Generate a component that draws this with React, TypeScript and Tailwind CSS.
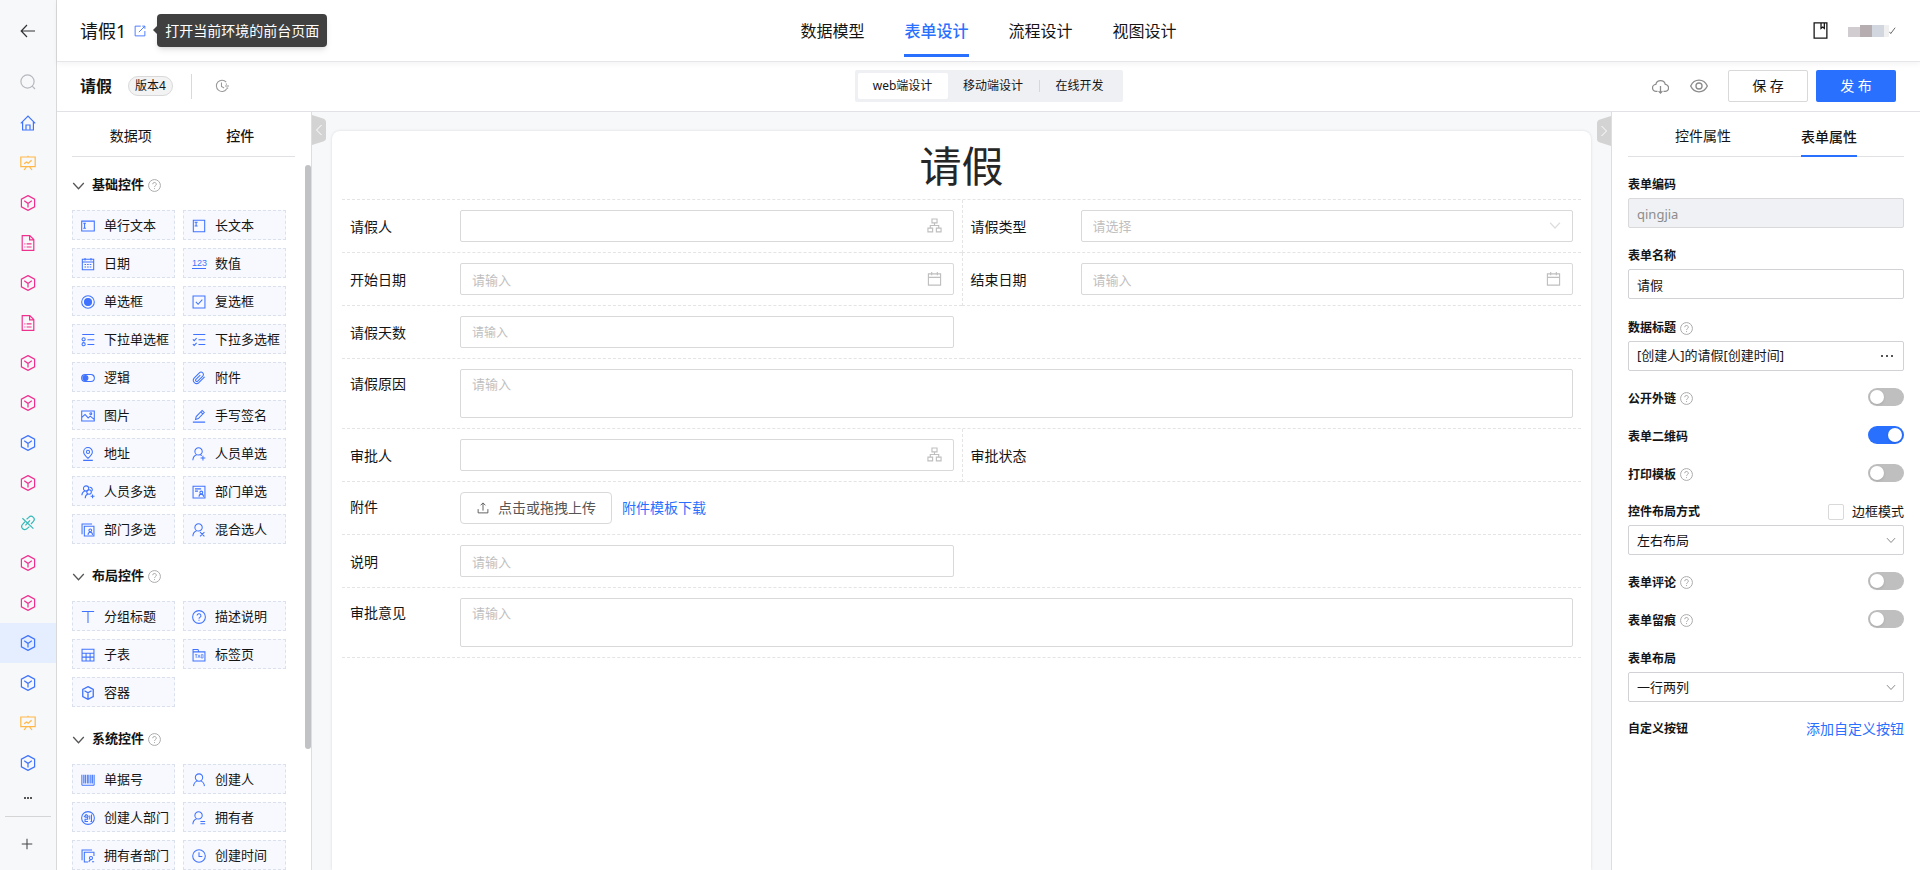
import type { ReactNode } from 'react'

const ICONS: Record<string, ReactNode> = {
  back: <path d="M15 8H1.5M7 2 1.2 8 7 14" />,
  search: (
    <>
      <circle cx="7.5" cy="7.5" r="6.6" />
      <path d="m12.2 12.2 2.8 2.8" />
    </>
  ),
  home: (
    <>
      <path d="M.8 8.4 8 1.2l7.2 7.2M2.6 6.8v8.2h10.8V6.8" />
      <path d="M6 14.8V10h4v4.8" />
    </>
  ),
  board: (
    <>
      <path d="M8 .8V2M.8 2h14.4v9.6H.8zM6.4 12 4 15M9.6 12l2.4 3" />
      <path d="m4.2 8.8 2.2-1.8 1.8 1.2 3.4-3" />
    </>
  ),
  cube: (
    <>
      <path d="M8 .6 14.6 4.2v7.6L8 15.4 1.4 11.8V4.2z" />
      <path d="M8 12.4V8.4L4.2 5.8M8 8.4l3.8-2.6" />
    </>
  ),
  doc: (
    <>
      <path d="M2.2.6h7.6l4 4v10.8H2.2zM9.6.8v4h4" />
      <path d="M4.4 8.8h1M6.6 8.8h5M4.4 12h1M6.6 12h5" />
    </>
  ),
  unlink: (
    <>
      <path d="M6.6 4.2 8.8 2.4a3 3 0 0 1 4.6 4L11 9M5 6.6 2.6 9.4a3 3 0 0 0 4.4 4.2L9.4 11.6" />
      <path d="m2.4 3.2 11 10.4M10 5.4l-4.6 5" />
    </>
  ),
  plus: <path d="M8 2v12M2 8h12" />,
  external: (
    <>
      <path d="M9 1.5H1.5v13h13V8" />
      <path d="M11 1.5h3.5V5M14.2 1.8 6.5 9.5" />
    </>
  ),
  history: (
    <>
      <path d="M12.8 3.6a6.4 6.4 0 1 0 .4 8M7.4 4v4.6l3 1.6M13 5v1.5M11.4 8H16M13 10.4h2" />
    </>
  ),
  book: <path d="M2 .8h12v14.4H2zM8.5 1v5l1.6-1.2L11.6 6V1" />,
  cloud: (
    <path d="M5.2 12.6H4A3.3 3.3 0 0 1 3.6 6 4.6 4.6 0 0 1 12.5 6a3.3 3.3 0 0 1-.4 6.6h-1.3M8 7.5v6.8M6.2 12.4 8 14.3l1.8-1.9" />
  ),
  eye: (
    <>
      <path d="M.6 8C2.2 4.6 4.9 2.8 8 2.8S13.8 4.6 15.4 8c-1.6 3.4-4.3 5.2-7.4 5.2S2.2 11.4.6 8z" />
      <circle cx="8" cy="8" r="2.7" />
    </>
  ),
  down: <path d="M1.5 5 8 12l6.5-7" strokeWidth="1.6" />,
  help: (
    <>
      <circle cx="8" cy="8" r="7.3" />
      <path d="M5.8 6.4a2.2 2.2 0 1 1 3.2 2c-.7.4-1 .8-1 1.5M8 11.2v1.2" />
    </>
  ),
  org: (
    <path d="M5.3 1h5.4v4.2H5.3zM1 10.8h5v4H1zM10 10.8h5v4h-5zM8 5.2V8M3.5 10.8V8h9v2.8" />
  ),
  calendar: <path d="M1.5 3h13v12h-13zM1.5 6.8h13M5 1v3.6M11 1v3.6" />,
  upload: <path d="M1.5 9.5v5h13v-5M8 11.5v-10M4.8 4.4 8 1.2l3.2 3.2" />,
  text: <path d="M.8 2.4h14.4v11.4H.8zM2.6 4.8h3M2.6 10.6h3M4.1 4.8v5.8" />,
  longText: <path d="M1.5 1.5h13v13h-13zM3 3.6h3.4M3 8h3.4M4.7 3.6V8" />,
  date: (
    <>
      <path d="M1.5 2.5h13v12h-13zM1.5 5.6h13M4.6 1v3M11.4 1v3" />
      <path d="M4 8.6h8M4 11.4h8" strokeDasharray="1.8 1.2" />
    </>
  ),
  radio: (
    <>
      <circle cx="8" cy="8" r="7.2" />
      <circle cx="8" cy="8" r="4" fill="currentColor" />
    </>
  ),
  check: <path d="M1.2 1.2h13.6v13.6H1.2zM4.4 7.8 7 10.6l4.8-5.4" />,
  selectOne: (
    <>
      <path d="M1.4 1.8h13.8M7.4 7.6h7.8M7.4 13.2h7.8" />
      <circle cx="3" cy="7.2" r="1.8" />
      <circle cx="3" cy="12.8" r="1.8" />
    </>
  ),
  selectMany: <path d="M1.4 1.8h13.8M7.4 7.6h7.8M7.4 13.2h7.8M1 7.2l1.5 1.6 2.8-3M1 12.6l1.5 1.6 2.8-3" />,
  toggle: (
    <>
      <rect x=".7" y="4" width="14.6" height="8" rx="4" />
      <circle cx="5" cy="8" r="2.9" fill="currentColor" />
    </>
  ),
  clip: (
    <path d="m14.4 6.6-6.6 6.8a3.8 3.8 0 0 1-5.4-5.3l6-6a2.7 2.7 0 0 1 3.9 3.8l-5.8 5.8a1.4 1.4 0 0 1-2-2l5-5" />
  ),
  image: (
    <>
      <path d="M.8 2.2h14.4v11.6H.8zM1 9.6l3.6-3.4 3.6 4 2.4-2 4.4 3.6" />
      <circle cx="11.2" cy="5.4" r="1.1" />
    </>
  ),
  sign: <path d="M1 15h14M4 12l.8-3.4L11.6 1.6l2.4 2.4-6.8 7zM10 3.4l2.2 2.2" />,
  pin: (
    <>
      <path d="M8 13C4.8 10 3 7.8 3 5.6a5 5 0 0 1 10 0C13 7.8 11.2 10 8 13zM2.5 15.3h11" />
      <circle cx="8" cy="5.6" r="1.8" />
    </>
  ),
  userAdd: (
    <>
      <circle cx="7.5" cy="5" r="4.2" />
      <path d="M1 15.2c0-3.6 1.8-5.4 4.2-6.4M9.6 8.8l1.6 1M12.5 10v5.4M9.8 12.6h5.4" />
    </>
  ),
  users: (
    <>
      <circle cx="5.8" cy="4" r="3" />
      <path d="M1 11.8C1 9 2.2 7.8 4.2 6.8M9.6 2.6a3 3 0 0 1 3 4.4" />
      <circle cx="9.2" cy="8" r="2.6" />
      <path d="M4.8 15c0-2.6 1.2-3.8 3-4.6M13.2 10.8v4.2M11 12.9h4.4" />
    </>
  ),
  dept: (
    <>
      <path d="M1.2 1.4h13.6v13.4H1.2zM3.4 4.4h7M3.4 7h3.4" />
      <circle cx="10.6" cy="8.6" r="1.6" />
      <path d="M8 13.4c.1-2 1-3 2.6-3s2.5 1 2.6 3" />
    </>
  ),
  depts: (
    <>
      <path d="M3.8 3.8h11v11h-11zM12.6 1.2H1.2v11.6" />
      <circle cx="10.6" cy="8.4" r="1.6" />
      <path d="M8 13.6c.1-2 1-3 2.6-3s2.5 1 2.6 3" />
    </>
  ),
  userMix: (
    <>
      <circle cx="7.5" cy="5" r="4.2" />
      <path d="M1 15.2c0-3.6 1.8-5.4 4.2-6.4M9.2 10.4l5 4.8M14.2 10.4l-5 4.8" />
    </>
  ),
  title: <path d="M1 1.8h14M8 1.8v13" />,
  tableGrid: <path d="M1.2 1.4h13.6v13.4H1.2zM1.2 6h13.6M1.2 10.4h13.6M5.8 6v8.6M10.4 6v8.6" />,
  tabPage: (
    <>
      <path d="M1.2 4.4h13.6v10.4H1.2zM1.2 4.4V1.6h5.6l1 2.8" />
      <path d="M3.4 7.6h2.8M4.8 7.6v3.8M6.8 11.4l1.2-3.6 1.2 3.6M10.6 7.6v3.8h2V7.6z" strokeWidth=".8" />
    </>
  ),
  box: <path d="M8 .8 14 4v8l-6 3.2L2 12V4zM4 5.4 8 7.8l4-2.4M8 7.8V15" strokeWidth="1.5" />,
  barcode: (
    <path d="M1 2v12M3.2 2v10M5 2v10M7.2 2v10M9 2v10M11.2 2v10M13 2v10M15 2v12M1 14h14" strokeWidth="1.2" />
  ),
  user: (
    <>
      <circle cx="8" cy="5.2" r="4.2" />
      <path d="M1.8 15c.2-3.2 1.8-5 4.2-6M14.2 15c-.2-3.2-1.8-5-4.2-6" />
    </>
  ),
  creatorDept: (
    <>
      <circle cx="8" cy="8" r="7.3" />
      <path d="M6 3.8 3.4 7M6 3.8l2.6 2.6M4.6 7h3v2.4H4.6V12H8M10 5v4.6M12 4v8h-1.2" />
    </>
  ),
  owner: (
    <>
      <circle cx="7.5" cy="5" r="4.2" />
      <path d="M1 15.2c0-3.6 1.8-5.4 4.2-6.4M9.6 12h5.4M9.6 14.6h5.4" />
    </>
  ),
  ownerDept: (
    <>
      <path d="M8 14.8H3.8v-11h11V8M12.6 1.2H1.2v11.6" />
      <circle cx="11.4" cy="10.4" r="1.8" />
      <path d="M9 15c.1-1.6 1-2.4 2.4-2.6M12.6 14.6H15" />
    </>
  ),
  clock: (
    <>
      <circle cx="8" cy="8" r="7.2" />
      <path d="M8 3.6V8.6h3.8" />
    </>
  ),
}

function Icon({ name, className = 'size-4' }: { name: string; className?: string }) {
  return (
    <svg
      viewBox="0 0 16 16"
      className={`shrink-0 ${className}`}
      fill="none"
      stroke="currentColor"
      strokeWidth="1.2"
      aria-hidden="true"
    >
      {ICONS[name]}
    </svg>
  )
}

const RAIL = [
  { icon: 'home', color: 'text-[#3f73ff]' },
  { icon: 'board', color: 'text-[#ffb848]' },
  { icon: 'cube', color: 'text-[#f0308f]' },
  { icon: 'doc', color: 'text-[#f0308f]' },
  { icon: 'cube', color: 'text-[#f0308f]' },
  { icon: 'doc', color: 'text-[#f0308f]' },
  { icon: 'cube', color: 'text-[#f0308f]' },
  { icon: 'cube', color: 'text-[#f0308f]' },
  { icon: 'cube', color: 'text-[#3f73ff]' },
  { icon: 'cube', color: 'text-[#f0308f]' },
  { icon: 'unlink', color: 'text-[#35b8b8]' },
  { icon: 'cube', color: 'text-[#f0308f]' },
  { icon: 'cube', color: 'text-[#f0308f]' },
  { icon: 'cube', color: 'text-[#3f73ff]', active: true },
  { icon: 'cube', color: 'text-[#3f73ff]' },
  { icon: 'board', color: 'text-[#ffb848]' },
  { icon: 'cube', color: 'text-[#3f73ff]' },
]

const NAV = ['数据模型', '表单设计', '流程设计', '视图设计']

const GROUPS = [
  {
    title: '基础控件',
    items: [
      ['text', '单行文本'],
      ['longText', '长文本'],
      ['date', '日期'],
      ['number', '数值'],
      ['radio', '单选框'],
      ['check', '复选框'],
      ['selectOne', '下拉单选框'],
      ['selectMany', '下拉多选框'],
      ['toggle', '逻辑'],
      ['clip', '附件'],
      ['image', '图片'],
      ['sign', '手写签名'],
      ['pin', '地址'],
      ['userAdd', '人员单选'],
      ['users', '人员多选'],
      ['dept', '部门单选'],
      ['depts', '部门多选'],
      ['userMix', '混合选人'],
    ],
  },
  {
    title: '布局控件',
    items: [
      ['title', '分组标题'],
      ['help', '描述说明'],
      ['tableGrid', '子表'],
      ['tabPage', '标签页'],
      ['box', '容器'],
    ],
  },
  {
    title: '系统控件',
    items: [
      ['barcode', '单据号'],
      ['user', '创建人'],
      ['creatorDept', '创建人部门'],
      ['owner', '拥有者'],
      ['ownerDept', '拥有者部门'],
      ['clock', '创建时间'],
    ],
  },
]

function Rail() {
  return (
    <aside className="flex w-[57px] shrink-0 flex-col border-r border-[#d9d9d9] bg-[#f7f8fa]">
      <button aria-label="返回" className="flex h-[62px] shrink-0 items-center justify-center text-[#333]">
        <Icon name="back" />
      </button>
      <button aria-label="搜索" className="flex h-[41px] shrink-0 items-center justify-center pb-0.5 text-[#b5b8bd]">
        <Icon name="search" />
      </button>
      {RAIL.map((item, i) => (
        <button
          key={i}
          aria-label={`应用${i + 1}`}
          className={`flex h-10 shrink-0 items-center justify-center ${item.color} ${item.active ? 'bg-[#e5eeff]' : ''}`}
        >
          <Icon name={item.icon} />
        </button>
      ))}
      <button aria-label="更多" className="flex h-[33px] shrink-0 items-center justify-center gap-px pb-1">
        <i className="size-0.5 bg-[#555]" />
        <i className="size-0.5 bg-[#555]" />
        <i className="size-0.5 bg-[#555]" />
      </button>
      <div className="mx-[5px] h-px shrink-0 bg-[#d5d5d5]" />
      <button aria-label="新增" className="flex flex-1 items-center justify-center pr-0.5 text-[#444]">
        <Icon name="plus" className="size-[14px]" />
      </button>
    </aside>
  )
}

function Header() {
  return (
    <header className="relative z-20 grid h-[62px] shrink-0 grid-cols-[1fr_auto_1fr] items-stretch border-b border-[#e4e6e9] bg-white shadow-[0_2px_6px_rgba(0,0,0,0.05)]">
      <div className="flex items-center pl-[23px]">
        <span className="text-lg">请假1</span>
        <a href="#open" aria-label="打开" className="ml-2 text-[#3f73ff]">
          <Icon name="external" className="size-3" />
        </a>
        <div
          role="tooltip"
          className="relative ml-[11px] rounded bg-[#404040] px-2 py-1.5 text-sm leading-[21px] text-white shadow-md"
        >
          <i className="absolute top-3 -left-1 h-0 w-0 border-y-4 border-r-4 border-y-transparent border-r-[#404040]" />
          打开当前环境的前台页面
        </div>
      </div>
      <nav className="flex gap-10 pb-1">
        {NAV.map((name) => {
          const isActive = name === '表单设计'
          return (
            <a
              key={name}
              href="#nav"
              className={`flex items-center border-b-[3px] pt-[7px] text-base ${
                isActive ? 'border-[#2970ff] font-medium text-[#2970ff]' : 'border-transparent'
              }`}
            >
              {name}
            </a>
          )
        })}
      </nav>
      <div className="flex items-center justify-end pr-6">
        <Icon name="book" className="size-[17px]" />
        <div className="ml-[19px] flex">
          <i className="mt-0.5 h-[10px] w-3 bg-[#d0cccf]" />
          <i className="h-3 w-3 bg-[#b5adaf]" />
          <i className="h-3 w-3 bg-[#d2d6de]" />
          <i className="h-3 w-[5px] bg-[#f0f0f0]" />
        </div>
        <svg viewBox="0 0 8 8" className="size-[7px]" fill="none" stroke="#555" aria-hidden="true">
          <path d="m.5 5.5 1.5 2L7 .8" />
        </svg>
      </div>
    </header>
  )
}

function Toolbar() {
  return (
    <div className="grid h-[50px] shrink-0 grid-cols-[1fr_auto_1fr] items-center border-b border-[#e0e2e5] bg-white pb-px">
      <div className="flex items-center pl-[23px]">
        <h1 className="text-base font-bold">请假</h1>
        <span className="ml-4 rounded-full border border-[#d9d9d9] bg-[#f3f3f3] px-1.5 text-xs leading-[18px]">
          版本4
        </span>
        <i className="ml-[18px] h-[25px] w-px bg-[#d9d9d9]" />
        <button aria-label="历史" className="ml-[23px] text-[#999]">
          <Icon name="history" className="size-[14px]" />
        </button>
      </div>
      <div className="flex items-center rounded-xs bg-[#eff0f4] p-[3px] text-xs">
        <button className="h-[26px] w-[90px] rounded-xs bg-white">web端设计</button>
        <button className="h-[26px] w-[91px]">移动端设计</button>
        <i className="h-3 w-px bg-[#d5d7db]" />
        <button className="h-[26px] w-20">在线开发</button>
      </div>
      <div className="flex items-center justify-end pr-6 text-sm">
        <button aria-label="下载" className="text-[#8c8c8c]">
          <Icon name="cloud" className="size-[17px]" />
        </button>
        <button aria-label="预览" className="mr-5 ml-[21px] text-[#8c8c8c]">
          <Icon name="eye" className="size-[18px]" />
        </button>
        <button className="h-8 w-20 rounded-xs border border-[#d9d9d9] bg-white">保 存</button>
        <button className="ml-2 h-8 w-20 rounded-xs bg-[#2970ff] text-white">发 布</button>
      </div>
    </div>
  )
}

function Palette() {
  return (
    <aside className="relative w-[255px] shrink-0 overflow-hidden border-r border-[#dcdee2] bg-white">
      <div className="ml-[15px] flex h-[45px] w-[223px] border-b border-[#dfe1e4] pt-1 pl-1 text-sm">
        <button className="w-[110px]">数据项</button>
        <button className="w-[110px] font-medium">控件</button>
      </div>
      <div className="pt-[3px] pl-[15px]">
        {GROUPS.map((group, i) => (
          <section key={group.title} className={i > 0 ? 'pt-[7px]' : ''}>
            <h2 className="flex h-[50px] items-center text-[13px] font-bold">
              <Icon name="down" className="mr-[7px] size-[13px] text-[#555]" />
              {group.title}
              <Icon name="help" className="ml-1 size-[13px] text-[#aaa]" />
            </h2>
            <div className="grid w-[214px] grid-cols-2 gap-2">
              {group.items.map(([icon, label]) => (
                <button
                  key={label}
                  className="flex h-[30px] items-center gap-[9px] border border-dashed border-[#dae1ec] bg-[#f8f9fe] pt-px pl-2 text-[13px] whitespace-nowrap"
                >
                  {icon === 'number' ? (
                    <span className="w-[14px] border-b border-[#3f73ff] font-['Liberation_Sans',sans-serif] text-[9px] leading-[10px] text-[#3f73ff]">
                      123
                    </span>
                  ) : (
                    <Icon name={icon} className="size-[14px] text-[#3f73ff]" />
                  )}
                  {label}
                </button>
              ))}
            </div>
          </section>
        ))}
      </div>
      <i className="absolute top-[53px] right-0 h-[77%] w-1.5 rounded-full bg-[#c1c2c5]" />
    </aside>
  )
}

type FieldProps = {
  id: string
  label: string
  divided?: boolean
  full?: boolean
  children?: ReactNode
}

function Field({ id, label, divided, full, children }: FieldProps) {
  return (
    <div
      className={`flex border-b border-dashed border-b-[#e4e4e4] px-2 py-[10px] ${full ? 'col-span-2' : ''} ${
        divided ? 'border-l border-l-[#e4e4e4]' : ''
      }`}
    >
      <label
        htmlFor={id}
        className={`w-[110px] shrink-0 text-sm leading-[22px] ${full ? 'pt-1' : 'pt-1.5'}`}
      >
        {label}
      </label>
      {children}
    </div>
  )
}

type TextBoxProps = { id: string; icon?: string; placeholder?: string; small?: boolean }

function TextBox({ id, icon, placeholder, small }: TextBoxProps) {
  return (
    <div className="relative flex-1">
      <input
        id={id}
        placeholder={placeholder}
        className={`h-8 w-full rounded-xs border border-[#d9d9d9] px-[11px] pt-px placeholder:text-[#bfbfbf] ${
          small ? 'text-xs' : 'text-[13px]'
        }`}
      />
      {icon && <Icon name={icon} className="absolute top-2 right-3 size-[15px] text-[#bfbfbf]" />}
    </div>
  )
}

function TextArea({ id }: { id: string }) {
  return (
    <textarea
      id={id}
      placeholder="请输入"
      className="block h-[49px] flex-1 resize-none rounded-xs border border-[#d9d9d9] px-[11px] py-1 text-[13px] leading-[20px] placeholder:text-[#bfbfbf]"
    />
  )
}

function Canvas() {
  return (
    <main className="relative flex min-w-0 flex-1 flex-col bg-[#f7f8fa] px-5 pt-[19px]">
      <button aria-label="收起左侧" className="absolute top-[3px] left-0 text-white">
        <svg viewBox="0 0 14 30" className="h-[30px] w-[14px]" fill="none" aria-hidden="true">
          <path d="M0 0 11 3.4Q14 4.4 14 7v16q0 2.6-3 3.6L0 30z" fill="#d3d3d3" />
          <path d="m9.5 10-5 5 5 5" stroke="currentColor" />
        </svg>
      </button>
      <button aria-label="收起右侧" className="absolute top-1 right-0 text-white">
        <svg viewBox="0 0 14 30" className="h-[30px] w-[14px]" fill="none" aria-hidden="true">
          <path d="M14 0 3 3.4Q0 4.4 0 7v16q0 2.6 3 3.6L14 30z" fill="#d3d3d3" />
          <path d="m4.5 10 5 5-5 5" stroke="currentColor" />
        </svg>
      </button>
      <div className="flex-1 rounded-t-lg bg-white px-[10px] shadow-[0_0_3px_rgba(0,0,0,0.12)]">
        <h2 className="border-b border-dashed border-[#e4e4e4] pt-[3px] pb-px text-center text-[42px] leading-[64px] text-[#262626]">
          请假
        </h2>
        <form className="grid grid-cols-2">
          <Field id="applicant" label="请假人">
            <TextBox id="applicant" icon="org" />
          </Field>
          <Field id="kind" label="请假类型" divided>
            <div className="relative flex-1">
              <select
                id="kind"
                className="h-8 w-full appearance-none rounded-xs border border-[#d9d9d9] px-[11px] pt-px text-[13px] text-[#bfbfbf]"
              >
                <option>请选择</option>
              </select>
              <Icon name="down" className="absolute top-[9px] right-3 size-3 text-[#ddd]" />
            </div>
          </Field>
          <Field id="start" label="开始日期">
            <TextBox id="start" icon="calendar" placeholder="请输入" />
          </Field>
          <Field id="end" label="结束日期" divided>
            <TextBox id="end" icon="calendar" placeholder="请输入" />
          </Field>
          <Field id="days" label="请假天数">
            <TextBox id="days" placeholder="请输入" small />
          </Field>
          <div className="border-b border-dashed border-[#e4e4e4]" />
          <Field id="reason" label="请假原因" full>
            <TextArea id="reason" />
          </Field>
          <Field id="approver" label="审批人">
            <TextBox id="approver" icon="org" />
          </Field>
          <Field id="state" label="审批状态" divided>
            <output id="state" />
          </Field>
          <Field id="attachment" label="附件" full>
            <button
              id="attachment"
              type="button"
              className="flex h-8 items-center gap-[9px] rounded border border-[#d9d9d9] pr-[15px] pl-4 text-sm text-[#555]"
            >
              <Icon name="upload" className="size-3" />
              点击或拖拽上传
            </button>
            <a href="#template" className="ml-[10px] text-sm leading-8 text-[#2970ff]">
              附件模板下载
            </a>
          </Field>
          <Field id="note" label="说明">
            <TextBox id="note" placeholder="请输入" />
          </Field>
          <div className="border-b border-dashed border-[#e4e4e4]" />
          <Field id="opinion" label="审批意见" full>
            <TextArea id="opinion" />
          </Field>
        </form>
      </div>
    </main>
  )
}

function PropLabel({ id, text, help }: { id: string; text: string; help?: boolean }) {
  return (
    <label htmlFor={id} className="flex h-[26px] items-center text-xs font-bold">
      {text}
      {help && <Icon name="help" className="ml-1 size-[13px] text-[#aaa]" />}
    </label>
  )
}

function SwitchRow({ id, text, help, on }: { id: string; text: string; help?: boolean; on?: boolean }) {
  return (
    <div className="flex h-[38px] items-center justify-between">
      <div className="pt-[3px]">
        <PropLabel id={id} text={text} help={help} />
      </div>
      <input
        id={id}
        type="checkbox"
        role="switch"
        defaultChecked={on}
        className="h-[18px] w-9 appearance-none rounded-full bg-[#bfbfbf] p-0.5 before:block before:size-[14px] before:rounded-full before:bg-white before:shadow checked:bg-[#2970ff] checked:before:translate-x-[18px]"
      />
    </div>
  )
}

function PropSelect({ id, value }: { id: string; value: string }) {
  return (
    <div className="relative">
      <select
        id={id}
        className="h-[30px] w-full appearance-none rounded-xs border border-[#d0d2d5] px-2 pt-px text-[13px]"
      >
        <option>{value}</option>
      </select>
      <Icon name="down" className="absolute top-[10px] right-2 size-[10px] text-[#888]" />
    </div>
  )
}

function Properties() {
  return (
    <aside className="w-[309px] shrink-0 overflow-hidden border-l border-[#dcdee2] bg-white px-4">
      <div className="flex h-[45px] justify-between border-b border-[#dfe1e4] px-[47px] text-sm">
        <button className="pt-1">控件属性</button>
        <button className="-mb-px border-b-2 border-[#2970ff] pt-1.5 font-medium">表单属性</button>
      </div>
      <div className="pt-[15px]">
        <PropLabel id="code" text="表单编码" />
        <input
          id="code"
          disabled
          defaultValue="qingjia"
          className="h-[30px] w-full rounded-xs border border-[#d9d9d9] bg-[#f0f1f5] px-2 pt-px text-[13px] text-[#8c8c8c]"
        />
      </div>
      <div className="pt-[15px]">
        <PropLabel id="name" text="表单名称" />
        <input
          id="name"
          defaultValue="请假"
          className="h-[30px] w-full rounded-xs border border-[#d0d2d5] px-2 text-[13px]"
        />
      </div>
      <div className="pt-4">
        <PropLabel id="title" text="数据标题" help />
        <div className="flex h-[30px] items-center rounded-xs border border-[#d0d2d5] px-2">
          <input
            id="title"
            defaultValue="[创建人]的请假[创建时间]"
            className="min-w-0 flex-1 text-[13px]"
          />
          <button aria-label="编辑标题" className="flex gap-[3px] px-0.5">
            <i className="size-0.5 bg-[#555]" />
            <i className="size-0.5 bg-[#555]" />
            <i className="size-0.5 bg-[#555]" />
          </button>
        </div>
      </div>
      <div className="pt-[7px]">
        <SwitchRow id="public" text="公开外链" help />
        <SwitchRow id="qrcode" text="表单二维码" on />
        <SwitchRow id="print" text="打印模板" help />
      </div>
      <div className="pt-[7px]">
        <div className="flex items-center justify-between">
          <PropLabel id="layout" text="控件布局方式" />
          <label className="flex items-center gap-2 text-[13px]">
            <input type="checkbox" className="size-4 appearance-none rounded-xs border border-[#d9d9d9] bg-white" />
            边框模式
          </label>
        </div>
        <PropSelect id="layout" value="左右布局" />
      </div>
      <div className="pt-[7px]">
        <SwitchRow id="comment" text="表单评论" help />
        <SwitchRow id="trace" text="表单留痕" help />
      </div>
      <div className="pt-2">
        <PropLabel id="columns" text="表单布局" />
        <PropSelect id="columns" value="一行两列" />
      </div>
      <div className="flex items-center justify-between pt-[17px]">
        <span className="text-xs font-bold">自定义按钮</span>
        <a href="#add" className="text-sm text-[#2970ff]">
          添加自定义按钮
        </a>
      </div>
    </aside>
  )
}

export default function App() {
  return (
    <div className="flex h-screen overflow-hidden bg-white font-['Noto_Sans','Noto_Sans_CJK_SC',sans-serif] text-[#141414]">
      <Rail />
      <div className="flex min-w-0 flex-1 flex-col">
        <Header />
        <Toolbar />
        <div className="flex min-h-0 flex-1">
          <Palette />
          <Canvas />
          <Properties />
        </div>
      </div>
    </div>
  )
}
